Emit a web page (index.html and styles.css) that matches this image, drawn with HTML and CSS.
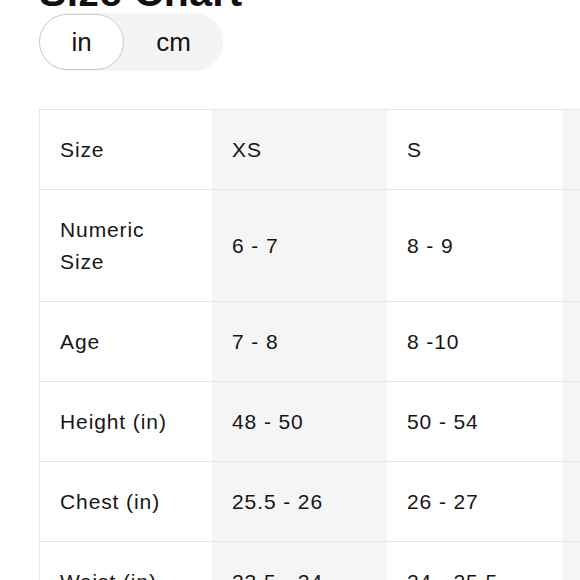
FILE: index.html
```html
<!DOCTYPE html>
<html lang="en">
<head>
<meta charset="utf-8">
<title>Size Chart</title>
<link rel="stylesheet" href="styles.css">
</head>
<body>
<div class="page">
  <h1 class="title">Size Chart</h1>
  <div class="toggle">
    <span class="seg seg-in active">in</span>
    <span class="seg seg-cm">cm</span>
  </div>
  <div class="chart-wrap">
    <div class="chart">
      <div class="cell">Size</div><div class="cell">XS</div><div class="cell">S</div><div class="cell">M</div><div class="cell">L</div><div class="cell">XL</div>
      <div class="cell">Numeric<br>Size</div><div class="cell">6 - 7</div><div class="cell">8 - 9</div><div class="cell">10 - 12</div><div class="cell">14 - 16</div><div class="cell">18 - 20</div>
      <div class="cell">Age</div><div class="cell">7 - 8</div><div class="cell">8 -10</div><div class="cell">10 - 12</div><div class="cell">12 - 14</div><div class="cell">14 - 16</div>
      <div class="cell">Height (in)</div><div class="cell">48 - 50</div><div class="cell">50 - 54</div><div class="cell">54 - 58</div><div class="cell">58 - 62</div><div class="cell">62 - 66</div>
      <div class="cell">Chest (in)</div><div class="cell">25.5 - 26</div><div class="cell">26 - 27</div><div class="cell">27 - 29</div><div class="cell">29 - 31</div><div class="cell">31 - 33</div>
      <div class="cell">Waist (in)</div><div class="cell">23.5 - 24</div><div class="cell">24 - 25.5</div><div class="cell">25.5 - 26.5</div><div class="cell">26.5 - 28</div><div class="cell">28 - 29.5</div>
    </div>
  </div>
</div>
</body>
</html>
```

FILE: styles.css
```css
html, body {
  margin: 0;
  padding: 0;
  background: #ffffff;
  overflow: hidden;
}

body {
  font-family: "Liberation Sans", Arial, Helvetica, sans-serif;
  color: #161616;
}

.page {
  padding-left: 39px;
}

.title {
  margin: -28px 0 0 0;
  font-size: 41px;
  line-height: 41px;
  font-weight: bold;
  letter-spacing: 0.3px;
  color: #111111;
}

.toggle {
  display: inline-flex;
  height: 58px;
  background: #f4f4f4;
  border-radius: 29px;
}

.seg {
  display: flex;
  align-items: center;
  justify-content: center;
  font-size: 26px;
  color: #151515;
  box-sizing: border-box;
}

.seg-in {
  width: 85px;
}

.seg-cm {
  width: 99px;
}

.active {
  background: #ffffff;
  border: 1px solid #c9c9c9;
  border-radius: 29px;
  margin: 1px 0;
}

.chart-wrap {
  margin-top: 38px;
  overflow: hidden;
}

.chart {
  display: grid;
  grid-template-columns: 172px repeat(5, 175px);
  width: max-content;
  border-top: 1px solid #e6e6e6;
  border-left: 1px solid #e6e6e6;
}

.cell {
  display: flex;
  align-items: center;
  padding: 24px 20px 23px 20px;
  font-size: 21px;
  line-height: 32px;
  letter-spacing: 0.9px;
  border-bottom: 1px solid #e6e6e6;
  background: #ffffff;
}

.cell:nth-child(6n+2),
.cell:nth-child(6n+4),
.cell:nth-child(6n+6) {
  background: #f5f5f5;
}
```
